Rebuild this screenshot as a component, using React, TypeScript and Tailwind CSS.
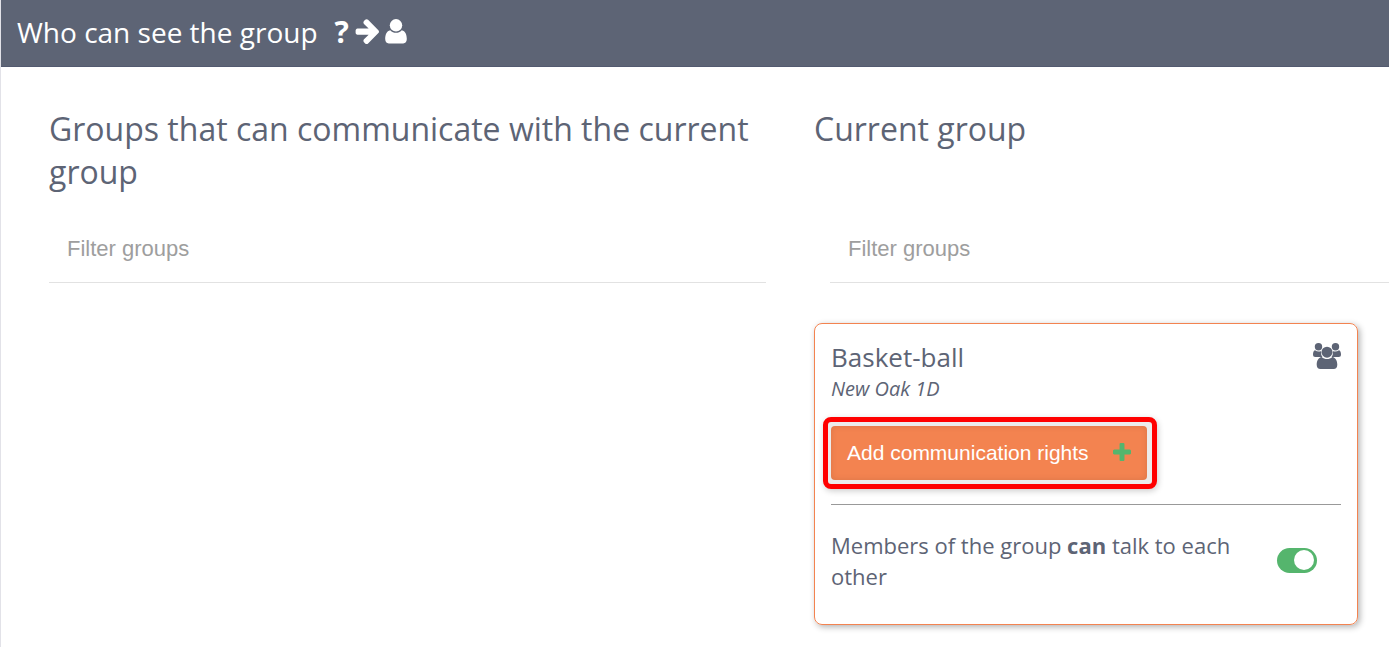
import React, { useState } from 'react';

function ArrowIcon() {
  return (
    <svg viewBox="90 165 1510 1574" className="h-[25px] w-6" fill="currentColor" aria-hidden="true">
      <path d="M1600 960q0 54-37 91l-651 651q-39 37-91 37-51 0-90-37l-75-75q-38-38-38-91t38-91l293-293h-704q-52 0-84.500-37.500t-32.500-90.500v-128q0-53 32.500-90.500t84.500-37.500h704l-293-294q-38-36-38-90t38-90l75-75q38-38 90-38 53 0 91 38l651 651q37 35 37 90z" />
    </svg>
  );
}

function UserIcon() {
  return (
    <svg viewBox="0 0 22 25" className="h-[25px] w-[22px]" fill="currentColor" aria-hidden="true">
      <circle cx="11" cy="6.300" r="6.200" />
      <path d="M5.200 11.200C7 13 8.800 13.800 11 13.800s4-.8 5.800-2.600C20.300 12 21.800 15.700 21.800 20c0 2.800-1.300 4.400-3.600 4.400H3.800C1.500 24.400.2 22.800.2 20c0-4.300 1.500-8 5-8.800z" />
    </svg>
  );
}

function GroupIcon() {
  return (
    <svg viewBox="0 0 28 26" className="h-[26px] w-7 shrink-0" fill="currentColor" role="img" aria-label="Group">
      <circle cx="5.500" cy="3.700" r="3.700" />
      <circle cx="22.500" cy="3.700" r="3.700" />
      <path d="M2 7.200c2 1.500 4.500 1.700 6.200.7-.5 2.400 0 4.500 1.300 6.100H2.400C.8 14 0 13.200 0 11.500 0 9.600.6 7.400 2 7.200zM26 7.200c-2 1.500-4.500 1.700-6.200.7.5 2.400 0 4.500-1.300 6.100h7.100c1.600 0 2.400-.8 2.400-2.500 0-1.900-.6-4.100-2-4.300z" />
      <circle cx="14" cy="9.200" r="5.500" />
      <path d="M8.700 13.900c1.600 1.400 3.300 2.100 5.300 2.100s3.700-.7 5.300-2.100c3.400.5 5 4 5 7.900 0 2.800-1.400 4.200-3.700 4.200H7.400c-2.300 0-3.700-1.400-3.700-4.200 0-3.900 1.600-7.400 5-7.900z" />
    </svg>
  );
}

function PlusIcon() {
  return (
    <svg viewBox="192 128 1408 1408" className="mb-[2px] size-[18px] text-[#55b56d]" fill="currentColor" aria-hidden="true">
      <path d="M1600 736v192q0 40-28 68t-68 28h-416v416q0 40-28 68t-68 28h-192q-40 0-68-28t-28-68v-416h-416q-40 0-68-28t-28-68v-192q0-40 28-68t68-28h416v-416q0-40 28-68t68-28h192q40 0 68 28t28 68v416h416q40 0 68 28t28 68z" />
    </svg>
  );
}

function FilterInput({ label, className = '' }: { label: string; className?: string }) {
  return (
    <div className={className}>
      <input
        type="text"
        aria-label={label}
        placeholder="Filter groups"
        className="h-[69px] w-full border-b border-[#e2e2e2] bg-transparent px-[18px] pt-[2px] font-['Liberation_Sans',Arial,sans-serif] text-[22px] outline-none placeholder:text-[#9e9e9e]"
      />
    </div>
  );
}

function GroupCard() {
  const [canTalk, setCanTalk] = useState(true);

  return (
    <article className="mr-[31px] rounded-lg border border-[#f38350] px-4 pt-[15px] pb-8 shadow-[2px_2px_6px_rgba(0,0,0,0.3)]">
      <div className="flex justify-between">
        <div>
          <h3 className="text-[26px] leading-9">Basket-ball</h3>
          <p className="text-[20px] leading-7 italic">New Oak 1D</p>
        </div>
        <div className="pt-1">
          <GroupIcon />
        </div>
      </div>

      <div className="-mx-2 mt-[14px] w-fit rounded-lg border-[5px] border-[#ff0000] bg-[#ececec] py-1 pr-[5px] pl-[3px] shadow-[1px_2px_6px_rgba(0,0,0,0.2)]">
        <button
          type="button"
          className="flex h-[54px] items-center gap-6 rounded-[4px] bg-[#f38350] px-4 font-['Liberation_Sans',Arial,sans-serif] text-[21px] text-white shadow-[inset_0_0_6px_rgba(0,0,0,0.1)]"
        >
          Add communication rights
          <PlusIcon />
        </button>
      </div>

      <hr className="mt-[15px] border-[#999999]" />

      <div className="mt-[25px] flex items-center justify-between pr-6">
        <label htmlFor="members-talk" className="max-w-[420px] text-[22px] leading-[31px]">
          Members of the group <strong className="font-bold">can</strong> talk to each other
        </label>
        <input
          id="members-talk"
          type="checkbox"
          role="switch"
          checked={canTalk}
          onChange={() => setCanTalk(!canTalk)}
          className="mb-[2px] flex h-[25px] w-10 shrink-0 cursor-pointer appearance-none items-center rounded-full bg-gray-400 px-[3px] before:size-5 before:rounded-full before:bg-white checked:justify-end checked:bg-[#55b56d]"
        />
      </div>
    </article>
  );
}

export default function App() {
  return (
    <div className="min-h-screen border-l border-[#e2e2e8] bg-white font-['Open_Sans',sans-serif] text-[#5d6475]">
      <header className="flex h-[67px] items-center border-b border-[#535a70] bg-[#5d6475] px-4 pb-[3px] text-white">
        <h1 className="text-[28px] leading-9">Who can see the group</h1>
        <div className="ml-[17px] flex items-center gap-[6px]">
          <span className="text-[30px] leading-9 font-bold">?</span>
          <ArrowIcon />
          <UserIcon />
        </div>
      </header>

      <main className="grid grid-cols-[717fr_575fr] gap-x-12 pt-10 pl-12">
        <section>
          <h2 className="min-h-[107px] text-[32px] leading-[43px]">
            Groups that can communicate with the current group
          </h2>
          <FilterInput label="Filter groups that can communicate" />
        </section>

        <section>
          <h2 className="min-h-[107px] text-[32px] leading-[43px]">Current group</h2>
          <FilterInput label="Filter current group" className="ml-4" />
          <div className="mt-10">
            <GroupCard />
          </div>
        </section>
      </main>
    </div>
  );
}
